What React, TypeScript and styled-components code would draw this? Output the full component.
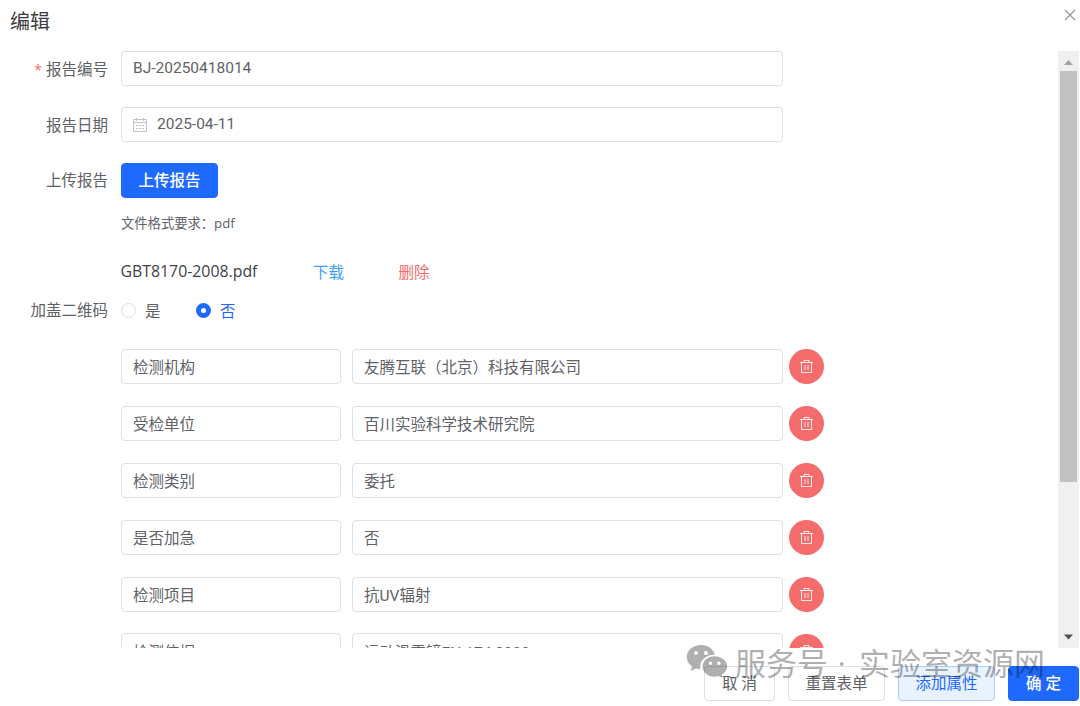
import React from "react";
import styled, { createGlobalStyle, css } from "styled-components";

const Global = createGlobalStyle`
  *, *::before { box-sizing: border-box; }
  body {
    margin: 0;
    background: #fff;
    overflow: hidden;
    font-family: "Open Sans", "Noto Sans CJK SC", sans-serif;
    font-size: 15.5px;
    color: #606266;
  }
`;

const Dialog = styled.div`
  position: relative;
  display: flex;
  flex-direction: column;
  width: 1080px;
  height: 706px;
  overflow: hidden;
`;

const Header = styled.header`
  display: flex;
  justify-content: space-between;
  height: 51px;
  flex: none;
  padding: 0 4px 0 10px;
`;

const Title = styled.h1`
  margin: 6px 0 0;
  font: 400 20px/30px "Noto Sans CJK SC", sans-serif;
  color: #3c3e42;
`;

const CloseIcon = styled.svg`
  width: 12px;
  height: 12px;
  margin-top: 9px;
`;

const Body = styled.div`
  display: flex;
  height: 597px;
  flex: none;
  padding-right: 1px;
`;

const Form = styled.form`
  flex: 1;
  overflow: hidden;
`;

const FormItem = styled.div<{ $gap?: number }>`
  display: flex;
  align-items: center;
  height: 35px;
  margin-bottom: ${(p) => p.$gap ?? 21}px;
`;

const Label = styled.label<{ $drop?: number }>`
  width: 121px;
  flex: none;
  padding: ${(p) => p.$drop ?? 0}px 13px 0 0;
  text-align: right;
  line-height: 35px;
  white-space: nowrap;
`;

const Required = styled.span`
  margin-right: 4px;
  font-size: 14px;
  color: #f56c6c;
`;

const Field = styled.div<{ $w: number; $latin?: boolean }>`
  display: flex;
  align-items: center;
  width: ${(p) => p.$w}px;
  height: 35.4px;
  flex: none;
  padding: ${(p) => (p.$latin ? "0 11px 1px" : "3px 11px 0")};
  border: 1px solid #dcdfe6;
  border-radius: 4px;
  background: #fff;
  font-family: Roboto, "Noto Sans CJK SC", sans-serif;
  line-height: 22px;
  white-space: nowrap;
`;

const CalendarIcon = styled.svg`
  width: 14px;
  height: 14px;
  margin: 1px 10px 0 0;
`;

const buttonKinds = {
  plain: css`background: #fff; border-color: #dcdfe6; color: #606266;`,
  soft: css`background: #e9f2ff; border-color: #a6d0ff; color: #1e69ff;`,
  primary: css`background: #1e69ff; border-color: #1e69ff; color: #fff; font-weight: 500;`,
};

const Button = styled.button<{ $kind: keyof typeof buttonKinds; $w: number }>`
  width: ${(p) => p.$w}px;
  height: 35px;
  flex: none;
  padding: 0;
  border: 1px solid;
  border-radius: 4px;
  font: 400 15.5px/33px "Open Sans", "Noto Sans CJK SC", sans-serif;
  white-space: pre;
  ${(p) => buttonKinds[p.$kind]}
`;

const Hint = styled.p`
  margin: 0 0 0 121px;
  height: 20px;
  font-size: 13.3px;
  line-height: 20px;
`;

const FileRow = styled.div`
  display: flex;
  align-items: center;
  height: 24px;
  margin: 26px 0 10px 120.5px;
`;

const FileName = styled.span`
  width: 192.5px;
  font-size: 15.85px;
  color: #404246;
`;

const Action = styled.a<{ $color: string }>`
  width: 85.5px;
  color: ${(p) => p.$color};
`;

const Radio = styled.span<{ $checked?: boolean }>`
  display: flex;
  align-items: center;
  gap: 9px;
  width: 75px;
  color: ${(p) => (p.$checked ? "#1e69ff" : "#606266")};

  &::before {
    content: "";
    width: 15px;
    height: 15px;
    flex: none;
    border-radius: 50%;
    background: #fff;
    border: ${(p) => (p.$checked ? "5px solid #1e69ff" : "1px solid #dcdfe6")};
  }
`;

const AttributeRow = styled.div`
  display: flex;
  align-items: center;
  height: 35.4px;
  margin: 0 0 21.5px 121px;
`;

const AttributeGap = styled.span`
  width: 11px;
  flex: none;
`;

const DeleteButton = styled.button`
  display: flex;
  align-items: center;
  justify-content: center;
  width: 35px;
  height: 35px;
  margin-left: 6px;
  padding: 0;
  border: 0;
  border-radius: 50%;
  background: #f56c6c;
`;

const Scrollbar = styled.div`
  display: flex;
  flex-direction: column;
  align-items: center;
  width: 21px;
  background: #f0f0f0;
`;

const ScrollArrow = styled.svg`
  width: 21px;
  height: 20px;
  flex: none;
`;

const Thumb = styled.div`
  width: 17px;
  height: 411px;
  background: #c1c1c1;
`;

const Spacer = styled.div`
  flex: 1;
`;

const Footer = styled.footer`
  display: flex;
  justify-content: flex-end;
  gap: 13px;
  padding: 18px 1px 0 0;
`;

const Watermark = styled.div`
  position: absolute;
  left: 686px;
  top: 643px;
  display: flex;
  opacity: 0.31;
  color: #000;
  font: 400 31px/38px "Noto Sans CJK SC", sans-serif;
  pointer-events: none;
  white-space: nowrap;
`;

const WatermarkLogo = styled.svg`
  width: 42px;
  height: 36px;
  margin-right: 7px;
`;

const WatermarkDot = styled.span`
  width: 27px;
  margin-right: 4px;
  padding-top: 1px;
  font-family: "Open Sans", sans-serif;
  text-align: center;
`;

const Trash = () => (
  <svg width="15" height="15" viewBox="0 0 15 15" fill="none" stroke="#fff" strokeOpacity=".85">
    <path d="M1 3.500h13M5 3.500v-2h5v2M2.500 3.500v10h10v-10M6 6v5M9 6v5" />
  </svg>
);

const attributes = [
  ["检测机构", "友腾互联（北京）科技有限公司"],
  ["受检单位", "百川实验科学技术研究院"],
  ["检测类别", "委托"],
  ["是否加急", "否"],
  ["检测项目", "抗UV辐射"],
  ["检测依据", "运动滑雪镜EN 174:2000"],
];

export default function App() {
  return (
    <Dialog>
      <Global />
      <Header>
        <Title>编辑</Title>
        <CloseIcon viewBox="0 0 12 12" stroke="#909399" fill="none">
          <path d="M1 1l10 10M11 1L1 11" strokeWidth="1.2" />
        </CloseIcon>
      </Header>
      <Body>
        <Form>
          <FormItem>
            <Label $drop={2}><Required>*</Required>报告编号</Label>
            <Field $w={662} $latin>BJ-20250418014</Field>
          </FormItem>
          <FormItem>
            <Label $drop={2}>报告日期</Label>
            <Field $w={662} $latin>
              <CalendarIcon viewBox="0 0 14 14" fill="none" stroke="#c0c4cc">
                <path d="M.5 1.500h13v12H.5zM.5 4.500h13M3.500 0v3M10.500 0v3" />
                <path d="M3 7.500h8M3 10.500h8" strokeDasharray="2 1" />
              </CalendarIcon>
              2025-04-11
            </Field>
          </FormItem>
          <FormItem $gap={15}>
            <Label>上传报告</Label>
            <Button type="button" $kind="primary" $w={97}>上传报告</Button>
          </FormItem>
          <Hint>文件格式要求：pdf</Hint>
          <FileRow>
            <FileName>GBT8170-2008.pdf</FileName>
            <Action $color="#409eff">下载</Action>
            <Action $color="#f56c6c">删除</Action>
          </FileRow>
          <FormItem $gap={21}>
            <Label>加盖二维码</Label>
            <Radio>是</Radio>
            <Radio $checked>否</Radio>
          </FormItem>
          {attributes.map(([name, value]) => (
            <AttributeRow key={name}>
              <Field $w={220}>{name}</Field>
              <AttributeGap />
              <Field $w={431}>{value}</Field>
              <DeleteButton type="button"><Trash /></DeleteButton>
            </AttributeRow>
          ))}
        </Form>
        <Scrollbar>
          <ScrollArrow viewBox="0 0 21 20"><path d="M6 14l4.500-5 4.500 5z" fill="#a3a3a3" /></ScrollArrow>
          <Thumb />
          <Spacer />
          <ScrollArrow viewBox="0 0 21 20"><path d="M6 6.500l4.500 5 4.500-5z" fill="#505050" /></ScrollArrow>
        </Scrollbar>
      </Body>
      <Footer>
        <Button $kind="plain" $w={71}>取 消</Button>
        <Button $kind="plain" $w={97}>重置表单</Button>
        <Button $kind="soft" $w={97}>添加属性</Button>
        <Button $kind="primary" $w={71}>确 定</Button>
      </Footer>
      <Watermark>
        <WatermarkLogo viewBox="0 0 42 36">
          <path
            fill="#000"
            fillRule="evenodd"
            d="M15 2C7 2 .8 7.200.8 14c0 4 2 7.200 5.200 9.500L4.800 28l5-2.500c1.500.4 3 .7 4.700.7-1.800-8.200 5.500-14.700 14.300-14.400C27.500 6 21.800 2 15 2zM10 8a2 2 0 110 4 2 2 0 010-4zm10 0a2 2 0 110 4 2 2 0 010-4z"
          />
          <path
            fill="#000"
            fillRule="evenodd"
            d="M28.500 13.200c-6.600 0-12 4.600-12 10.300s5.400 10.300 12 10.300c1.500 0 2.900-.3 4.200-.7l4 2.200-1-3.600c3.300-2 5.500-4.800 5.500-8.200 0-5.700-6-10.300-12.700-10.300zM24.500 18.500a1.700 1.700 0 110 3.400 1.700 1.700 0 010-3.400zm8.500 0a1.700 1.700 0 110 3.400 1.700 1.700 0 010-3.400z"
          />
        </WatermarkLogo>
        <span>服务号</span>
        <WatermarkDot>·</WatermarkDot>
        <span>实验室资源网</span>
      </Watermark>
    </Dialog>
  );
}
